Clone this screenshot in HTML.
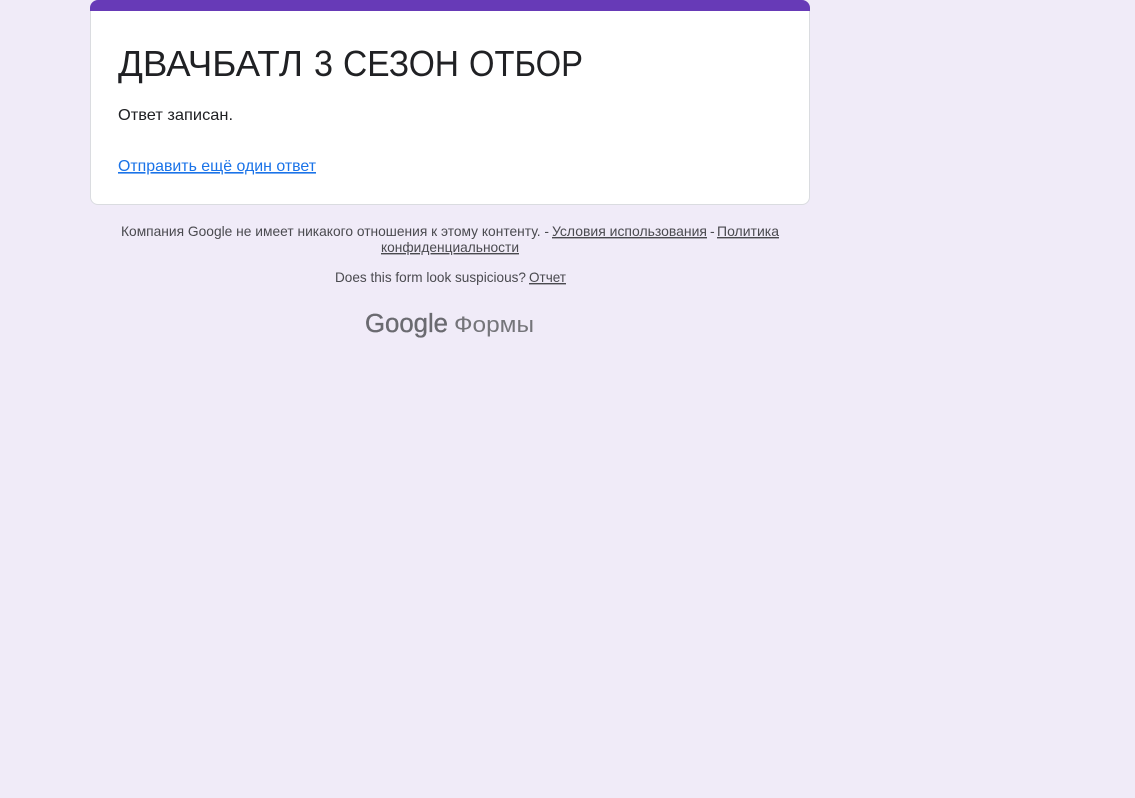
<!DOCTYPE html>
<html lang="ru">
<head>
<meta charset="utf-8">
<title>ДВАЧБАТЛ 3 СЕЗОН ОТБОР</title>
<style>
html,body{margin:0;padding:0;width:1135px;height:798px;overflow:hidden;background:#f0ebf8;}
.card{position:absolute;left:90px;top:0;width:718px;height:203px;background:#fff;border:1px solid #dadce0;border-radius:8px;}
.bar{position:absolute;left:90px;top:0;width:720px;height:11px;background:#673ab7;border-radius:8px 8px 0 0;}
svg{position:absolute;left:0;top:0;}
text{font-family:"Liberation Sans",sans-serif;}
.u{text-decoration:underline;}
.f{font-size:14px;fill:#4a4a4f;}
.t{font-size:36.5px;fill:#202124;}
</style>
</head>
<body>
<div class="card"></div>
<div class="bar"></div>
<svg width="1135" height="798" viewBox="0 0 1135 798" xmlns="http://www.w3.org/2000/svg">
  <text x="118" y="76" class="t" textLength="185" lengthAdjust="spacingAndGlyphs">ДВАЧБАТЛ</text>
  <text x="314" y="76" class="t" textLength="19" lengthAdjust="spacingAndGlyphs">3</text>
  <text x="343" y="76" class="t" textLength="116" lengthAdjust="spacingAndGlyphs">СЕЗОН</text>
  <text x="469" y="76" class="t" textLength="114" lengthAdjust="spacingAndGlyphs">ОТБОР</text>
  <text x="118" y="120" font-size="16" fill="#202124" textLength="115" lengthAdjust="spacingAndGlyphs">Ответ записан.</text>
  <text x="118" y="171" font-size="16" fill="#1a73e8" class="u" textLength="198" lengthAdjust="spacingAndGlyphs">Отправить ещё один ответ</text>

  <text x="121" y="236" class="f" textLength="428" lengthAdjust="spacingAndGlyphs">Компания Google не имеет никакого отношения к этому контенту. -</text>
  <text x="552" y="236" class="f u" textLength="155" lengthAdjust="spacingAndGlyphs">Условия использования</text>
  <text x="710" y="236" class="f">-</text>
  <text x="717" y="236" class="f u" textLength="62" lengthAdjust="spacingAndGlyphs">Политика</text>
  <text x="381" y="252" class="f u" textLength="138" lengthAdjust="spacingAndGlyphs">конфиденциальности</text>
  <text x="335" y="282" class="f" textLength="191" lengthAdjust="spacingAndGlyphs">Does this form look suspicious?</text>
  <text x="529" y="282" class="f u" textLength="37" lengthAdjust="spacingAndGlyphs">Отчет</text>

  <text x="365" y="332" font-size="25.5" fill="#6a6a70" stroke="#6a6a70" stroke-width="0.35" textLength="83" lengthAdjust="spacingAndGlyphs">Google</text>
  <text x="454" y="332" font-size="22.5" fill="#75757a" textLength="80" lengthAdjust="spacingAndGlyphs">Формы</text>
</svg>
</body>
</html>
